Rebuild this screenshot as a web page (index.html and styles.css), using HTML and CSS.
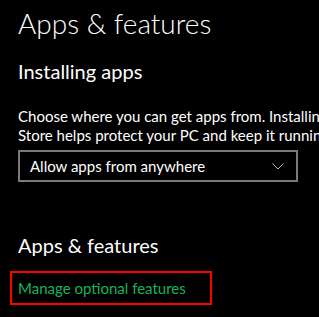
FILE: index.html
```html
<!DOCTYPE html>
<html>
<head>
    <title>Apps &amp; features</title>
    <link rel="stylesheet" href="styles.css">
</head>
<body>
    <div class="page">
        <h1 class="title">Apps &amp; features</h1>

        <div class="section">
            <h2 class="section-title">Installing apps</h2>
            <p class="desc">
                <span>Choose where you can get apps from. Installing only apps from the</span><br>
                <span>Store helps protect your PC and keep it running smoothly.</span>
            </p>
            <div class="dropdown">
                <span class="dropdown-value">Allow apps from anywhere</span>
                <svg class="chevron" width="12" height="7" viewBox="0 0 12 7">
                    <path d="M0.5 0.5 L6 6 L11.5 0.5" fill="none" stroke="#bdbdbd" stroke-width="1"/>
                </svg>
            </div>
        </div>

        <div class="section">
            <h2 class="section-title">Apps &amp; features</h2>
            <div class="link-box">
                <a class="link" href="#">Manage optional features</a>
            </div>
        </div>
    </div>
</body>
</html>
```

FILE: styles.css
```css
* { box-sizing: border-box; }

body {
    margin: 0;
    background: #000;
    color: #fff;
    font-family: Lato, "Open Sans", Arial, sans-serif;
    overflow: hidden;
}

.page {
    padding: 0 0 0 18px;
}

.title {
    margin: 0;
    padding-top: 4px;
    font-size: 28px;
    font-weight: 300;
    line-height: 38px;
}

.section-title {
    margin: 0;
    font-size: 20px;
    font-weight: 400;
    line-height: 28px;
}

.section:first-of-type .section-title {
    margin-top: 15px;
}

.desc {
    margin: 22px 0 0 0;
    font-size: 15px;
    line-height: 19px;
    white-space: nowrap;
}

.dropdown {
    margin-top: 5px;
    width: 280px;
    height: 32px;
    border: 2px solid #7a7a7a;
    display: flex;
    align-items: center;
    justify-content: space-between;
    padding: 0 10px 0 10px;
    font-size: 15px;
}

.chevron {
    margin-right: 2px;
}

.section + .section .section-title {
    margin-top: 49px;
}

.link-box {
    margin-top: 12px;
    margin-left: -8px;
    width: 202px;
    height: 34px;
    border: 2px solid #ff0000;
    display: flex;
    align-items: center;
    padding-left: 6px;
}

.link {
    color: #17b35c;
    text-decoration: none;
    font-size: 15px;
}
```
